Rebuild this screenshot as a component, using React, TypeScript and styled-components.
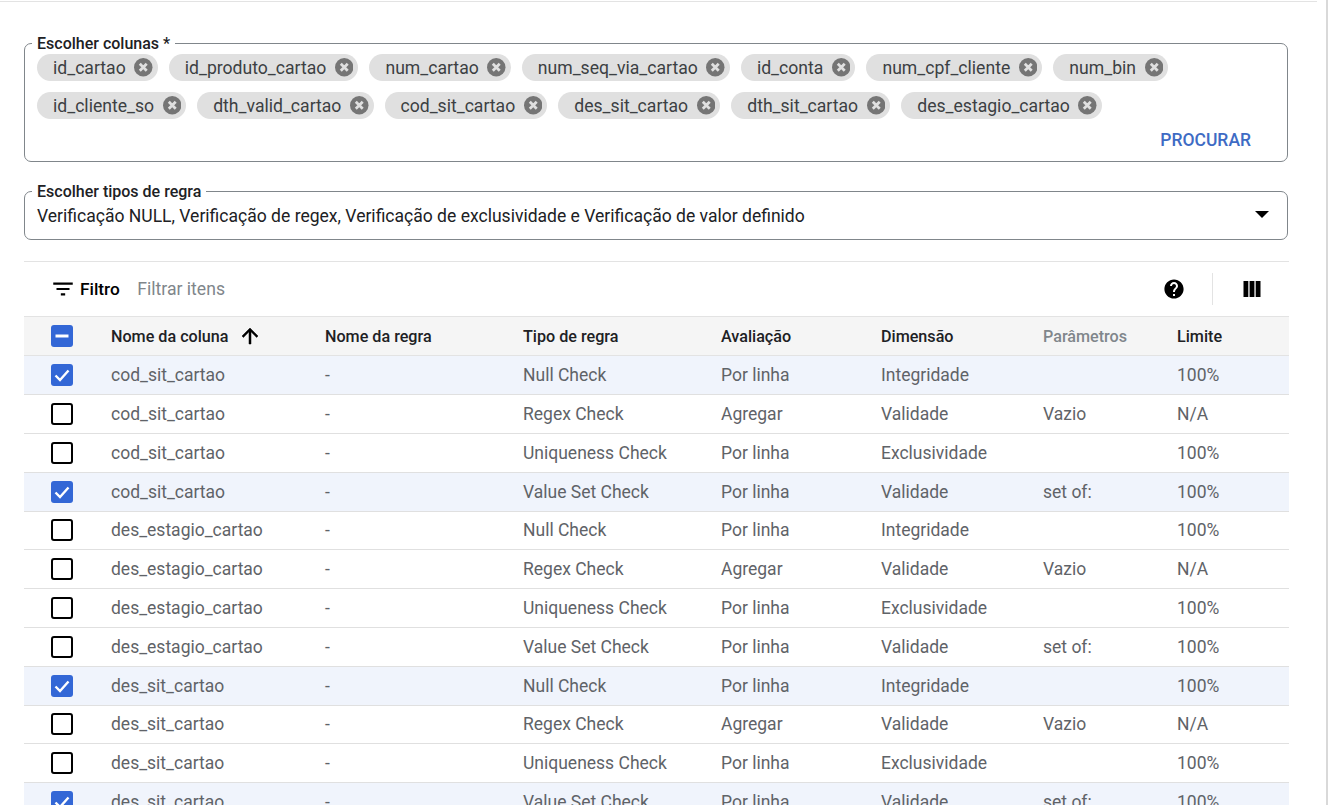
import { FC } from 'react';
import styled, { createGlobalStyle } from 'styled-components';

const GlobalStyle = createGlobalStyle`
  html, body { margin: 0; padding: 0; background: #fff; overflow: hidden; }
  body { font-family: Roboto, "Liberation Sans", sans-serif; color: #000; }
`;

const Page = styled.div`
  position: relative;
  width: 1329px;
  height: 805px;
  overflow: hidden;
  box-sizing: border-box;
  padding-top: 43px;
`;

const TopRule = styled.div`
  position: absolute;
  top: 1px;
  left: 0;
  width: 1317px;
  height: 1px;
  background: #e3e3e3;
`;

const EdgeRule = styled.div`
  position: absolute;
  top: 0;
  right: 1px;
  width: 2px;
  height: 805px;
  background: #d9d9d9;
`;

const Content = styled.div`
  width: 1265px;
  margin-left: 24px;
`;

const Field = styled.fieldset<{ $height: number }>`
  box-sizing: border-box;
  position: relative;
  width: 1264px;
  height: ${p => p.$height}px;
  margin: 0;
  padding: 0 12px;
  border: 1px solid #80868b;
  border-radius: 7px;
  min-inline-size: 0;
`;

const Legend = styled.legend`
  padding: 0 5px;
  margin-left: -5px;
  font-size: 16px;
  font-weight: 500;
  line-height: 2px;
  height: 1px;
  color: #202124;
`;

const ChipRows = styled.div`
  display: flex;
  flex-direction: column;
  gap: 11px;
  padding-top: 10px;
`;

const ChipRow = styled.div`
  display: flex;
  gap: 11px;
`;

const Chip = styled.span`
  display: inline-flex;
  align-items: center;
  height: 27px;
  padding: 0 5px 0 16px;
  border-radius: 14px;
  background: #e0e0e0;
  font-size: 17.6px;
  color: #3c4043;
`;

const ChipClose = styled.svg`
  width: 18.5px;
  height: 18.5px;
  margin-left: 8.6px;
`;

const SearchButton = styled.button`
  position: absolute;
  right: 36px;
  bottom: 11px;
  padding: 0;
  border: 0;
  background: none;
  font-family: inherit;
  font-size: 17.5px;
  font-weight: 500;
  color: #3e6bc4;
`;

const SelectField = styled(Field)`
  margin-top: 29px;
`;

const SelectValue = styled.div`
  display: flex;
  align-items: center;
  justify-content: space-between;
  height: 47px;
  padding-right: 6px;
  font-size: 17.55px;
  color: #202124;
`;

const Caret = styled.span`
  width: 0;
  height: 0;
  margin-top: -2px;
  border-left: 7px solid transparent;
  border-right: 7px solid transparent;
  border-top: 7px solid #000;
`;

const Toolbar = styled.div`
  display: flex;
  align-items: center;
  height: 54px;
  margin-top: 21px;
  border-top: 1px solid #e3e3e3;
  padding-left: 25.5px;
`;

const FilterLabel = styled.span`
  margin-left: 4.5px;
  font-size: 17.3px;
  font-weight: 500;
`;

const FilterHint = styled.span`
  margin-left: 17.5px;
  font-size: 17.6px;
  color: #80868b;
`;

const ToolbarEnd = styled.div`
  display: flex;
  align-items: center;
  margin-left: auto;
  padding-right: 25px;
`;

const Divider = styled.span`
  width: 1px;
  height: 32px;
  margin: 0 27px 0 26px;
  background: #e3e3e3;
`;

const COLUMNS = '87px 214px 198px 198px 160px 162px 134px 1fr';

const HeadRow = styled.div`
  display: grid;
  grid-template-columns: ${COLUMNS};
  align-items: center;
  box-sizing: border-box;
  height: 40.4px;
  background: #f5f5f5;
  border-top: 1px solid #e3e3e3;
  border-bottom: 1px solid #e3e3e3;
`;

const HeadCell = styled.div<{ $muted?: boolean }>`
  display: flex;
  align-items: center;
  font-size: 16.15px;
  font-weight: 500;
  color: ${p => (p.$muted ? '#80868b' : '#202124')};
`;

const Row = styled.div<{ $selected?: boolean }>`
  display: grid;
  grid-template-columns: ${COLUMNS};
  align-items: center;
  box-sizing: border-box;
  height: 38.8px;
  background: ${p => (p.$selected ? '#f0f4fc' : '#fff')};
  border-bottom: 1px solid #e0e0e0;
`;

const Cell = styled.div`
  font-size: 17.5px;
  color: #5f6368;
  white-space: nowrap;
`;

const CheckCell = styled.div`
  padding-left: 27px;
  display: flex;
`;

const Box = styled.span<{ $on?: boolean }>`
  box-sizing: border-box;
  display: flex;
  align-items: center;
  justify-content: center;
  width: 22px;
  height: 22px;
  border-radius: 3px;
  background: ${p => (p.$on ? '#3367d6' : '#fff')};
  border: ${p => (p.$on ? '0' : '2px solid #000')};
`;

const SortArrow = styled.svg`
  width: 24px;
  height: 24px;
  margin-left: 9.5px;
  stroke: #000;
  stroke-width: 0.5;
`;

const ToolIcon = styled.svg<{ $size?: number }>`
  width: ${p => p.$size ?? 24}px;
  height: ${p => p.$size ?? 24}px;
  fill: #000;
`;

type Rule = [string, string, string, string, string, boolean];

const rule = (column: string, kind: number, selected: boolean): Rule => {
  const kinds: [string, string, string, string, string][] = [
    ['Null Check', 'Por linha', 'Integridade', '', '100%'],
    ['Regex Check', 'Agregar', 'Validade', 'Vazio', 'N/A'],
    ['Uniqueness Check', 'Por linha', 'Exclusividade', '', '100%'],
    ['Value Set Check', 'Por linha', 'Validade', 'set of:', '100%'],
  ];
  const [type, evaluation, dimension, params, limit] = kinds[kind];
  return [column, type, evaluation, dimension, params + '|' + limit, selected];
};

const rows: Rule[] = [
  rule('cod_sit_cartao', 0, true),
  rule('cod_sit_cartao', 1, false),
  rule('cod_sit_cartao', 2, false),
  rule('cod_sit_cartao', 3, true),
  rule('des_estagio_cartao', 0, false),
  rule('des_estagio_cartao', 1, false),
  rule('des_estagio_cartao', 2, false),
  rule('des_estagio_cartao', 3, false),
  rule('des_sit_cartao', 0, true),
  rule('des_sit_cartao', 1, false),
  rule('des_sit_cartao', 2, false),
  rule('des_sit_cartao', 3, true),
];

const chips = [
  ['id_cartao', 'id_produto_cartao', 'num_cartao', 'num_seq_via_cartao', 'id_conta', 'num_cpf_cliente', 'num_bin'],
  ['id_cliente_so', 'dth_valid_cartao', 'cod_sit_cartao', 'des_sit_cartao', 'dth_sit_cartao', 'des_estagio_cartao'],
];

const Check: FC = () => (
  <svg width="22" height="22" viewBox="0 0 22 22" fill="none" stroke="#fff" strokeWidth="2.4">
    <path d="M4.5 11.5 9 16 17.5 6.5" />
  </svg>
);

export default function App() {
  return (
    <Page>
      <GlobalStyle />
      <TopRule />
      <EdgeRule />
      <Content>
        <Field $height={119}>
          <Legend>Escolher colunas *</Legend>
          <ChipRows>
            {chips.map((line, i) => (
              <ChipRow key={i}>
                {line.map(name => (
                  <Chip key={name}>
                    {name}
                    <ChipClose viewBox="0 0 24 24">
                      <circle cx="12" cy="12" r="12" fill="#757575" />
                      <path d="M7.5 7.5 16.5 16.5M16.5 7.5 7.5 16.5" stroke="#e0e0e0" strokeWidth="3.6" />
                    </ChipClose>
                  </Chip>
                ))}
              </ChipRow>
            ))}
          </ChipRows>
          <SearchButton>PROCURAR</SearchButton>
        </Field>
        <SelectField $height={49}>
          <Legend>Escolher tipos de regra</Legend>
          <SelectValue>
            Verificação NULL, Verificação de regex, Verificação de exclusividade e Verificação de valor definido
            <Caret />
          </SelectValue>
        </SelectField>
        <Toolbar>
          <ToolIcon $size={26} viewBox="0 0 24 24">
            <path d="M10 18h4v-2h-4v2zM3 6v2h18V6H3zm3 7h12v-2H6v2z" />
          </ToolIcon>
          <FilterLabel>Filtro</FilterLabel>
          <FilterHint>Filtrar itens</FilterHint>
          <ToolbarEnd>
            <ToolIcon viewBox="0 0 24 24">
              <path d="M12 2.4C6.7 2.4 2.4 6.7 2.4 12s4.3 9.6 9.6 9.6 9.6-4.3 9.6-9.6S17.3 2.4 12 2.4zm1 16.6h-2v-2h2v2zm2.07-7.75-.9.92C13.45 12.9 13 13.5 13 15h-2v-.5c0-1.1.45-2.1 1.17-2.83l1.24-1.26c.37-.36.59-.86.59-1.41 0-1.1-.9-2-2-2s-2 .9-2 2H8c0-2.21 1.79-4 4-4s4 1.79 4 4c0 .88-.36 1.68-.93 2.25z" />
            </ToolIcon>
            <Divider />
            <ToolIcon viewBox="0 0 24 24">
              <path d="M3.5 4h4.8v16H3.500zM9.600 4h4.800v16H9.600zM15.700 4h4.800v16h-4.800z" />
            </ToolIcon>
          </ToolbarEnd>
        </Toolbar>
        <HeadRow>
          <CheckCell>
            <Box $on>
              <svg width="22" height="22" viewBox="0 0 22 22" fill="#fff">
                <path d="M4.500 9.500h13v3h-13z" />
              </svg>
            </Box>
          </CheckCell>
          <HeadCell>
            Nome da coluna
            <SortArrow viewBox="0 0 24 24">
              <path d="M4 12l1.41 1.41L11 7.83V20h2V7.83l5.58 5.59L20 12l-8-8-8 8z" />
            </SortArrow>
          </HeadCell>
          <HeadCell>Nome da regra</HeadCell>
          <HeadCell>Tipo de regra</HeadCell>
          <HeadCell>Avaliação</HeadCell>
          <HeadCell>Dimensão</HeadCell>
          <HeadCell $muted>Parâmetros</HeadCell>
          <HeadCell>Limite</HeadCell>
        </HeadRow>
        {rows.map(([column, type, evaluation, dimension, rest, selected], i) => {
          const [params, limit] = rest.split('|');
          return (
            <Row key={i} $selected={selected}>
              <CheckCell>
                <Box $on={selected}>{selected && <Check />}</Box>
              </CheckCell>
              <Cell>{column}</Cell>
              <Cell>-</Cell>
              <Cell>{type}</Cell>
              <Cell>{evaluation}</Cell>
              <Cell>{dimension}</Cell>
              <Cell>{params}</Cell>
              <Cell>{limit}</Cell>
            </Row>
          );
        })}
      </Content>
    </Page>
  );
}
